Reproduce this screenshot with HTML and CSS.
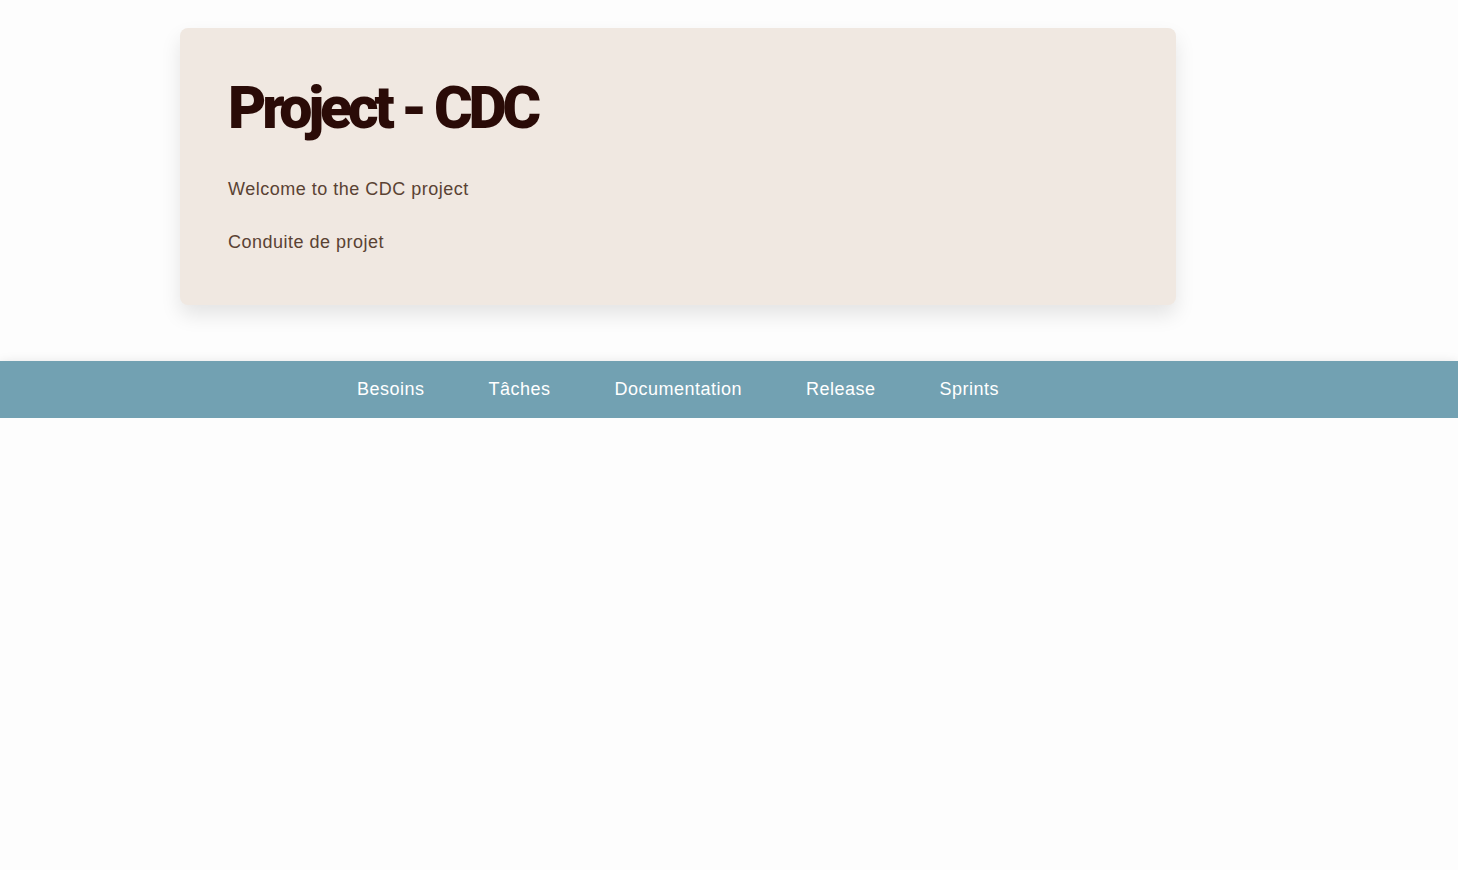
FILE: index.html
```html
<!DOCTYPE html>
<html lang="fr">
<head>
<meta charset="utf-8">
<title>Project - CDC</title>
<link rel="stylesheet" href="styles.css">
</head>
<body>
<header class="wrap">
  <section class="card">
    <h1 class="title">Project - CDC</h1>
    <p class="text">Welcome to the CDC project</p>
    <p class="text">Conduite de projet</p>
  </section>
</header>
<nav class="nav">
  <div class="nav-inner">
    <a class="nav-link" href="#">Besoins</a>
    <a class="nav-link" href="#">Tâches</a>
    <a class="nav-link" href="#">Documentation</a>
    <a class="nav-link" href="#">Release</a>
    <a class="nav-link" href="#">Sprints</a>
  </div>
</nav>
</body>
</html>
```
FILE: styles.css
```css
html, body {
  margin: 0;
  padding: 0;
  background: #fdfdfd;
  font-family: "Liberation Sans", Arial, sans-serif;
}
.wrap {
  width: 996px;
  margin-left: 180px;
  padding-top: 28px;
}
.card {
  background: #f0e8e1;
  border-radius: 8px;
  box-shadow: 0 10px 20px rgba(0,0,0,0.1);
  padding: 44px 48px 49px;
}
.title {
  margin: 0 0 32px;
  font-family: Roboto, sans-serif;
  font-weight: 900;
  font-size: 59px;
  line-height: 72px;
  letter-spacing: -4.2px;
  color: #2a0b07;
}
.text {
  margin: 0;
  font-size: 18px;
  line-height: 27px;
  letter-spacing: 0.5px;
  color: #5a4233;
}
.text + .text {
  margin-top: 26px;
}
.nav {
  position: relative;
  margin-top: 56px;
  background: #72a1b2;
  height: 57px;
  box-shadow: 0 4px 12px rgba(0,0,0,0.18);
}
.nav-inner {
  width: 996px;
  margin-left: 180px;
  height: 100%;
  display: flex;
  justify-content: center;
  align-items: center;
}
.nav-link {
  color: #ffffff;
  text-decoration: none;
  font-size: 18px;
  letter-spacing: 0.5px;
  padding: 0 32px;
}
```
